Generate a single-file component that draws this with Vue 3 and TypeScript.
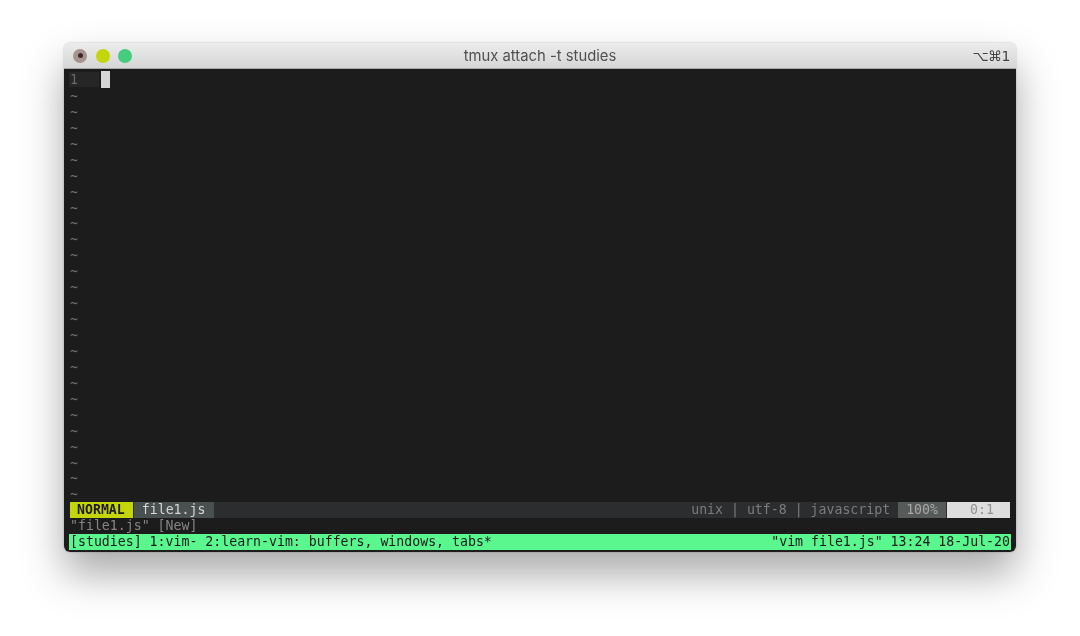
<script setup lang="ts">
const tildes: number[] = Array.from({ length: 26 }, (_, i) => i);
</script>

<template>
  <div class="page">
    <div class="window">
      <div class="titlebar">
        <div class="lights">
          <span class="light close"><i></i></span>
          <span class="light minimize"></span>
          <span class="light zoom"></span>
        </div>
        <div class="title">tmux attach -t studies</div>
        <div class="shortcut">⌥⌘1</div>
      </div>
      <div class="terminal">
        <div class="buffer">
          <div class="row first">
            <span class="gutter">1</span><span class="cursor"></span>
          </div>
          <div v-for="t in tildes" :key="t" class="row tilde">~</div>
        </div>
        <div class="status">
          <span class="mode">NORMAL</span>
          <span class="file">file1.js</span>
          <span class="spacer"></span>
          <span class="meta">unix | utf-8 | javascript</span>
          <span class="percent">100%</span>
          <span class="pos">0:1</span>
        </div>
        <div class="row message">"file1.js" [New]</div>
        <div class="tmux">
          <span>[studies] 1:vim- 2:learn-vim: buffers, windows, tabs*</span>
          <span>"vim file1.js" 13:24 18-Jul-20</span>
        </div>
      </div>
    </div>
  </div>
</template>

<style>
html, body { margin: 0; background: #fff; }
</style>

<style scoped>
.page {
  width: 1080px;
  height: 636px;
  box-sizing: border-box;
  padding: 43px 64px 0;
  overflow: hidden;
  background: #fff;
}
.window {
  width: 952px;
  height: 509px;
  display: flex;
  flex-direction: column;
  border-radius: 6px;
  overflow: hidden;
  filter: blur(0.35px);
  box-shadow: 0 22px 42px rgba(0, 0, 0, 0.34), 0 0 2px rgba(0, 0, 0, 0.3);
}
.titlebar {
  height: 26px;
  flex: none;
  position: relative;
  display: flex;
  align-items: center;
  justify-content: space-between;
  background: linear-gradient(#ececec, #d6d6d6);
  box-sizing: border-box;
  border-bottom: 1px solid #a9a9a9;
  padding: 0 6px 0 9px;
}
.lights { display: flex; gap: 8.5px; align-items: center; }
.light {
  width: 14px;
  height: 14px;
  border-radius: 50%;
  display: flex;
  align-items: center;
  justify-content: center;
}
.close { background: #a5948f; }
.close i { width: 5px; height: 5px; border-radius: 50%; background: #3a2a2a; }
.minimize { background: #c3d609; }
.zoom {
  background-color: #45cc7e;
  background-image: radial-gradient(circle, #178f4e 45%, transparent 50%);
  background-size: 2px 2px;
}
.title {
  position: absolute;
  left: 0;
  right: 0;
  text-align: center;
  font: 14.8px Inter, "Liberation Sans", sans-serif;
  color: #505050;
}
.shortcut {
  font: 14px "DejaVu Sans", sans-serif;
  color: #444;
  letter-spacing: -0.5px;
}
.terminal {
  flex: 1;
  background: #1c1c1c;
  padding-top: 2.5px;
  font: 13.22px/15.95px "DejaVu Sans Mono", monospace;
  color: #8a8a8a;
  display: flex;
  flex-direction: column;
}
.buffer { flex: none; }
.row { height: 15.95px; padding-left: 6px; white-space: pre; }
.first { display: flex; background: linear-gradient(90deg, transparent 5px, #262626 5px, #262626 35px, transparent 35px); }
.gutter { width: 31px; flex: none; color: #6a6a6a; }
.cursor { width: 9px; height: 17px; margin-top: -1px; background: #d6d6d6; }
.tilde { color: #6f6f6f; box-sizing: border-box; padding-top: 1.5px; }
.status {
  height: 15.95px;
  flex: none;
  margin-left: 6px;
  margin-right: 6px;
  display: flex;
  background: #2b2d2e;
}
.mode { background: #c3d609; color: #1c1c1c; font-weight: 700; padding: 0 8px 0 7px; }
.file { background: #4a4f50; color: #d6d6d6; margin-left: 1px; padding: 0 9px 0 8px; }
.spacer { flex: 1; }
.meta { color: #7c7c7c; }
.percent { background: #565a58; color: #a8a8a8; margin-left: 8px; padding: 0 8px; }
.pos { width: 63px; box-sizing: border-box; text-align: right; padding-right: 16px; background: #dedede; color: #929292; margin-left: 1px; }
.message { color: #858585; }
.tmux {
  height: 15.95px;
  flex: none;
  display: flex;
  justify-content: space-between;
  margin: 0 5px;
  padding: 0 1px;
  white-space: pre;
  background: #5af78e;
  color: #1c1c1c;
}
</style>
